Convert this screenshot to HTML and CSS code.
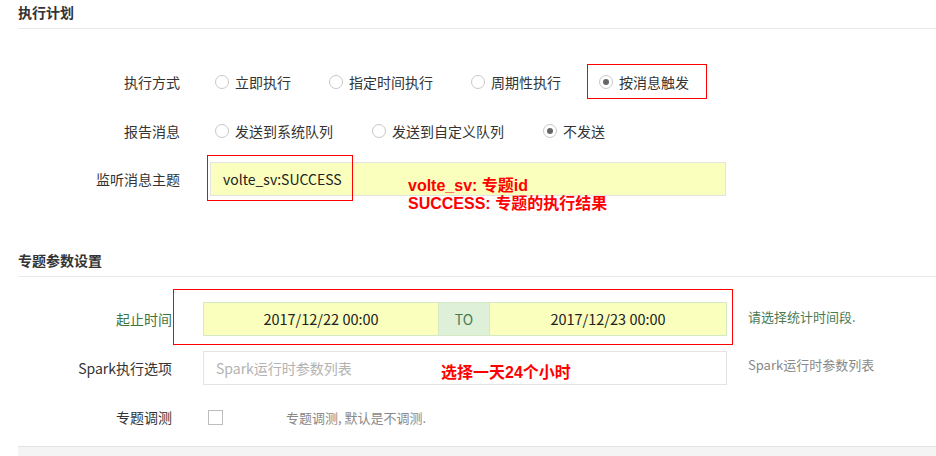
FILE: index.html
```html
<!DOCTYPE html>
<html lang="zh-CN">
<head>
<meta charset="utf-8">
<title>执行计划</title>
<link rel="stylesheet" href="styles.css">
</head>
<body>
<div class="page">
  <div class="section-title">执行计划</div>

  <div class="row row-plan-1">
    <div class="lbl lbl-a">执行方式</div>
    <div class="ctrl-a radios">
      <span class="radio"><i class="dot"></i>立即执行</span>
      <span class="radio"><i class="dot"></i>指定时间执行</span>
      <span class="radio"><i class="dot"></i>周期性执行</span>
      <span class="radio"><i class="dot on"></i>按消息触发</span>
    </div>
    <div class="mark mark-radio"></div>
  </div>

  <div class="row row-plan-2">
    <div class="lbl lbl-a">报告消息</div>
    <div class="ctrl-a radios">
      <span class="radio"><i class="dot"></i>发送到系统队列</span>
      <span class="radio"><i class="dot"></i>发送到自定义队列</span>
      <span class="radio"><i class="dot on"></i>不发送</span>
    </div>
  </div>

  <div class="row row-plan-3">
    <div class="lbl lbl-a">监听消息主题</div>
    <div class="ctrl-a">
      <div class="input input-topic autofill">volte_sv:SUCCESS</div>
    </div>
    <div class="mark mark-topic"></div>
    <div class="note note-topic">volte_sv: 专题id<br>SUCCESS: 专题的执行结果</div>
  </div>

  <div class="section-title section-2">专题参数设置</div>

  <div class="row row-date">
    <div class="lbl lbl-b lbl-success">起止时间</div>
    <div class="ctrl-b">
      <div class="range">
        <div class="range-in autofill range-left">2017/12/22 00:00</div>
        <div class="range-to">TO</div>
        <div class="range-in autofill range-right">2017/12/23 00:00</div>
      </div>
    </div>
    <div class="help help-success">请选择统计时间段.</div>
    <div class="mark mark-date"></div>
  </div>

  <div class="row row-spark">
    <div class="lbl lbl-b">Spark执行选项</div>
    <div class="ctrl-b">
      <div class="input input-spark placeholder">Spark运行时参数列表</div>
    </div>
    <div class="help">Spark运行时参数列表</div>
    <div class="note note-spark">选择一天24个小时</div>
  </div>

  <div class="row row-debug">
    <div class="lbl lbl-b">专题调测</div>
    <div class="ctrl-b debug">
      <span class="checkbox"></span>
      <span class="debug-help">专题调测, 默认是不调测.</span>
    </div>
  </div>

  <div class="footer-bar"></div>
</div>
</body>
</html>
```

FILE: styles.css
```css
html, body {
  margin: 0;
  padding: 0;
  background: #fff;
}

body {
  font-family: "Noto Sans CJK SC", "Noto Sans", sans-serif;
  font-size: 14px;
  color: #333;
  width: 936px;
  height: 456px;
  overflow: hidden;
}

.page {
  padding-left: 18px;
}

.section-title {
  font-weight: bold;
  font-size: 14px;
  line-height: 17px;
  padding: 4px 0 7px;
  border-bottom: 1px solid #eaeaea;
  color: #333;
}

.section-2 {
  margin-top: 52px;
}

.row {
  position: relative;
  display: flex;
  align-items: center;
  height: 34px;
}

.row-plan-1 { margin-top: 36px; }
.row-plan-2 { margin-top: 15px; }
.row-plan-3 { margin-top: 14px; }

.row-date { margin-top: 25px; }
.row-spark { margin-top: 15px; }
.row-debug { margin-top: 15px; }

.lbl {
  text-align: right;
  flex: none;
  line-height: 20px;
}

.lbl-a { width: 162px; }
.lbl-b { width: 154px; }

.lbl-success { color: #3c763d; }

.ctrl-a {
  margin-left: 30px;
  display: flex;
  align-items: center;
}

.ctrl-b {
  margin-left: 31px;
  display: flex;
  align-items: center;
}

.radios {
  padding-left: 5px;
}

.radio {
  display: inline-flex;
  align-items: center;
  line-height: 20px;
  margin-right: 38px;
  white-space: nowrap;
}

.row-plan-2 .radio { margin-right: 39px; }

.dot {
  box-sizing: border-box;
  width: 14px;
  height: 14px;
  border: 1px solid #c8c8c8;
  border-radius: 50%;
  margin-right: 6px;
  background: #fff;
  position: relative;
  flex: none;
}

.dot.on::after {
  content: "";
  position: absolute;
  left: 3px;
  top: 3px;
  width: 6px;
  height: 6px;
  border-radius: 50%;
  background: #666;
}

.input {
  box-sizing: border-box;
  height: 34px;
  border: 1px solid #e3e3e3;
  line-height: 32px;
  padding: 0 12px;
  white-space: nowrap;
}

.autofill { background: #faffbd; }

.input-topic {
  width: 516px;
  color: #222;
}

.input-spark {
  width: 524px;
  background: #fff;
}

.placeholder { color: #b3b3b3; }

.range {
  display: flex;
  box-sizing: border-box;
  width: 524px;
  height: 34px;
  border: 1px solid #d6e9c6;
}

.range-in {
  text-align: center;
  line-height: 32px;
  color: #222;
  font-size: 14.5px;
}

.range-left { width: 234px; }
.range-right { flex: 1; }

.range-to {
  width: 52px;
  text-align: center;
  line-height: 32px;
  background: #dff0d8;
  border-left: 1px solid #d6e9c6;
  border-right: 1px solid #d6e9c6;
  box-sizing: border-box;
  color: #4a7a55;
}

.help {
  margin-left: 21px;
  font-size: 13px;
  color: #888;
  line-height: 18px;
  align-self: flex-start;
  margin-top: 5px;
  white-space: nowrap;
}

.help-success {
  color: #4a7a55;
  margin-top: 6px;
}

.debug {
  padding-left: 5px;
}

.checkbox {
  box-sizing: border-box;
  width: 15px;
  height: 15px;
  border: 1px solid #bdbdbd;
  background: #fff;
  flex: none;
}

.debug-help {
  margin-left: 63px;
  font-size: 13px;
  color: #888;
}

.mark {
  position: absolute;
  box-sizing: border-box;
  border: 1px solid #f00;
  pointer-events: none;
}

.mark-radio {
  left: 569px;
  top: -1px;
  width: 120px;
  height: 35px;
}

.mark-topic {
  left: 189px;
  top: -7px;
  width: 146px;
  height: 46px;
}

.mark-date {
  left: 155px;
  top: -13px;
  width: 560px;
  height: 56px;
}

.note {
  position: absolute;
  font-family: "Liberation Sans", "Noto Sans CJK SC", sans-serif;
  font-weight: bold;
  color: #f00;
  font-size: 16px;
  line-height: 18px;
  white-space: nowrap;
}

.note-topic {
  left: 390px;
  top: 15px;
}

.note-spark {
  left: 423px;
  top: 13px;
}

.footer-bar {
  margin-top: 12px;
  height: 9px;
  background: #f4f4f4;
  border-top: 1px solid #e3e3e3;
}
```
